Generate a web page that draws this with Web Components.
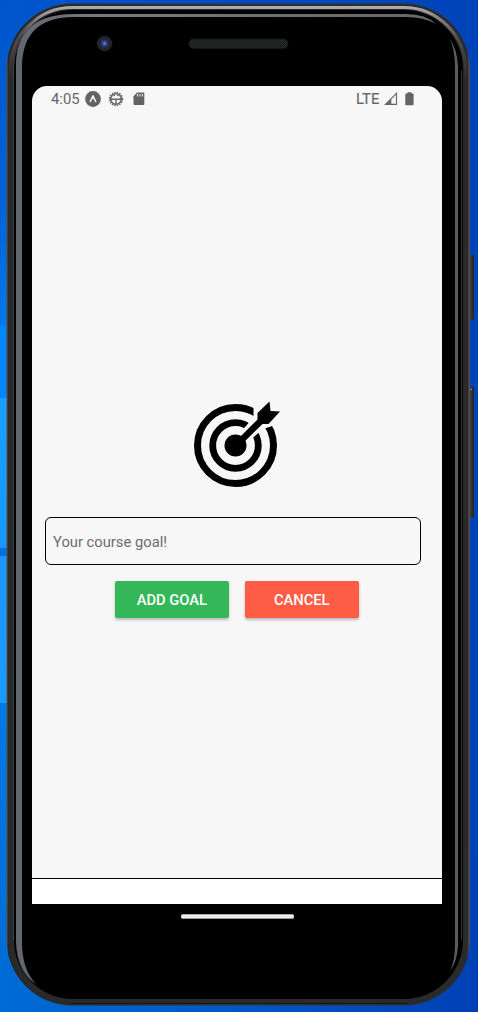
<!DOCTYPE html>
<html lang="en">
<head>
<meta charset="utf-8">
<title>Course goals</title>
<style>
html,body{margin:0;height:100%;overflow:hidden}
body{font-family:Roboto,"Liberation Sans",sans-serif}
</style>
</head>
<body>
<phone-device>
  <status-bar slot="status"></status-bar>
  <goal-form></goal-form>
</phone-device>
<script>
function define(name, html) {
  const t = document.createElement('template');
  t.innerHTML = html;
  customElements.define(name, class extends HTMLElement {
    constructor() {
      super();
      this.attachShadow({mode:'open'}).appendChild(t.content.cloneNode(true));
    }
  });
}

define('phone-frame', `
<style>:host{display:block;width:478px;height:1012px}svg{display:block}</style>
<svg width="478" height="1012" viewBox="0 0 478 1012">
  <defs>
    <linearGradient id="wall"><stop offset="0" stop-color="#0057cd"/><stop offset=".5" stop-color="#004ac5"/><stop offset="1" stop-color="#0043b9"/></linearGradient>
    <linearGradient id="base"><stop offset="0" stop-color="#006bd4"/><stop offset=".45" stop-color="#0059ca"/><stop offset="1" stop-color="#0040b5"/></linearGradient>
    <linearGradient id="left" x2="0" y2="1">
      <stop offset="0" stop-color="#0055cb"/><stop offset=".2" stop-color="#0062d8"/><stop offset=".32" stop-color="#0078ea"/>
      <stop offset=".3925" stop-color="#0090ff"/><stop offset=".393" stop-color="#18a0ff"/><stop offset=".541" stop-color="#1897fb"/><stop offset=".5411" stop-color="#0070dc"/>
      <stop offset=".549" stop-color="#0070dc"/><stop offset=".5491" stop-color="#1d94fa"/><stop offset=".695" stop-color="#1b9bff"/>
      <stop offset=".6951" stop-color="#0079e4"/><stop offset=".85" stop-color="#0071dc"/><stop offset="1" stop-color="#006bd4"/>
    </linearGradient>
    <linearGradient id="edge"><stop offset="0" stop-color="#5b5653"/><stop offset=".004" stop-color="#292727"/><stop offset=".5" stop-color="#333"/><stop offset=".993" stop-color="#2b2c2c"/><stop offset="1" stop-color="#555"/></linearGradient>
    <linearGradient id="topFade" gradientUnits="userSpaceOnUse" x1="0" y1="5" x2="0" y2="80"><stop offset="0" stop-color="#b3b2b5"/><stop offset=".15" stop-color="#8b8b8d"/><stop offset=".45" stop-color="#4c4c4d"/><stop offset="1" stop-color="#2a2a2a"/></linearGradient>
    <linearGradient id="silver"><stop offset="0" stop-color="#62656d"/><stop offset=".2" stop-color="#777a82"/><stop offset="1" stop-color="#66676d"/></linearGradient>
    <linearGradient id="key"><stop offset="0" stop-color="#171717"/><stop offset=".5" stop-color="#3d3b39"/><stop offset="1" stop-color="#242322"/></linearGradient>
    <pattern id="mesh" width="2" height="2" patternUnits="userSpaceOnUse"><rect width="2" height="2" fill="#1b1f1d"/><path d="M0 0h1v1H0zM1 1h1v1H1z" fill="#242927"/></pattern>
    <radialGradient id="lens"><stop offset="0" stop-color="#7a91d2"/><stop offset=".22" stop-color="#34488b"/><stop offset=".52" stop-color="#202a55"/><stop offset=".6" stop-color="#242529"/><stop offset="1" stop-color="#202123"/></radialGradient>
  </defs>
  <rect width="478" height="1012" fill="url(#wall)"/>
  <rect y="850" width="478" height="162" fill="url(#base)"/>
  <rect width="9" height="1012" fill="url(#left)"/>
  <path d="M0 324L8 327V398H0Z" fill="#0085fb"/>
  <rect x="467" y="255" width="7" height="65" rx="1.5" fill="url(#key)"/>
  <rect x="467" y="387" width="7" height="131" rx="1.5" fill="url(#key)"/>
  <circle cx="471" cy="389.5" r="1" fill="#85817d"/>
  <rect x="6.500" y="3.500" width="463.500" height="1002" rx="66" fill="url(#edge)"/>
  <rect x="8" y="5" width="460" height="999" rx="64" fill="#292929"/>
  <rect x="10.500" y="7.500" width="455" height="993" rx="62" fill="none" stroke="url(#topFade)" stroke-width="3.200"/>
  <rect x="14" y="10" width="449" height="989" rx="59" fill="#000"/>
  <path d="M13.500 940V70Q13.500 35 35 19" fill="none" stroke="#444" stroke-width="1"/>
  <path d="M461.500 70V940" fill="none" stroke="#343536" stroke-width="1"/>
  <path d="M16 80V66C16 30 36 14 75 14H406Q426 14 436 24Q424 17 406 17H74C39 17 22 34 22 68V945Q23 972 37 985Q17 972 16 942Z" fill="url(#silver)"/>
  <path d="M450 39Q457 49 458 66V946Q457 962 450 971Q455 961 455 944V69Q455 50 450 39Z" fill="#5b5b61"/>
  <path d="M70 1003.500H408" stroke="#161616" stroke-width="1"/>
  <circle cx="104.500" cy="43.500" r="7.800" fill="url(#lens)"/>
  <rect x="189" y="39" width="99" height="9.500" rx="4.500" fill="url(#mesh)" stroke="#171b19" stroke-width=".7"/>
</svg>`);

define('phone-device', `
<style>
:host{display:grid;width:478px;height:1012px}
phone-frame,.body{grid-area:1/1}
.body{z-index:1;display:flex;flex-direction:column;padding:86px 36px 0 32px;box-sizing:border-box;align-items:center}
.screen{display:flex;flex-direction:column;box-sizing:border-box;width:410px;height:793px;background:#f7f7f7;border-bottom:1px solid #000;border-radius:15px 15px 0 0}
.nav{width:410px;height:25px;background:#fff}
.pill{width:113px;height:5px;box-sizing:border-box;border-radius:2px;background:#ececec;border-top:1px solid #aaa;border-bottom:1px solid #999;margin:10px 0 0 0}
</style>
<phone-frame></phone-frame>
<div class="body"><div class="screen"><slot name="status"></slot><slot></slot></div><div class="nav"></div><div class="pill"></div></div>`);

define('status-bar', `
<style>
:host{display:flex;justify-content:space-between;height:26px;padding:0 28px 0 19px;color:#666;font-size:14.8px;line-height:27px}
.group{display:flex;align-items:center}
svg{display:block;flex:none}
.lte{font-size:14.800px;line-height:26px;letter-spacing:.1px;-webkit-text-stroke:.15px #666;margin-right:.5px}
</style>
<div class="group"><span>4:05</span>
<svg style="margin-left:5px" width="16" height="26" viewBox="0 0 16 26"><circle cx="8" cy="13" r="7.900" fill="#636363"/><path d="M4.400 15.800Q6.600 11.200 7.300 9.500Q8 8.700 8.700 9.500Q9.400 11.200 11.600 15.800L10.500 16.600Q9 13.500 8 12.200Q7 13.500 5.500 16.600Z" fill="#f7f7f7"/></svg>
<svg style="margin-left:7.500px" width="16" height="26" viewBox="0 0 16 26"><g fill="none" stroke="#666"><circle cx="8" cy="13" r="6.500" stroke-width="1.500" stroke-dasharray="1.450 1.102"/><circle cx="8" cy="13" r="5.300" stroke-width="1.600"/><path d="M3 13.300h10M8 13v5M5.800 8.500l.8 1.500M10.200 8.500l-.8 1.500" stroke-width="1.400"/></g></svg>
<svg style="margin-left:9px" width="12" height="26" viewBox="0 0 12 26"><path d="M4 6.500h6.500Q11.300 6.500 11.300 7.500v10.500Q11.300 19 10.300 19H1.500Q.5 19 .5 18v-7.800Z" fill="#636363"/><path d="M4.500 8v2.500M6.900 8v2.500M9.300 8v2.500" stroke="#f7f7f7" stroke-width="1"/></svg>
</div>
<div class="group"><span class="lte">LTE</span>
<svg style="margin-left:4px" width="14" height="26" viewBox="0 0 14 26"><path d="M1.400 18.400L12.500 7.300V18.400Z" fill="none" stroke="#666" stroke-width="1.100"/><path d="M1 18.700L7.300 12.400V18.700Z" fill="#666"/></svg>
<svg style="margin-left:7px" width="9" height="26" viewBox="0 0 9 26"><path d="M2.500 6.300h4v1.200H8q.6 0 .6.700v10.300q0 .7-.7.700H1q-.7 0-.7-.7V8.200q0-.7.700-.7h1.500Z" fill="#636363"/></svg>
</div>`);

define('goal-target', `
<style>:host{display:block;width:90px;height:90px}svg{display:block}</style>
<svg width="90" height="90" viewBox="0 0 90 90">
<g fill="none" stroke="#000" stroke-width="7"><circle cx="45.500" cy="45.500" r="38"/><circle cx="45.500" cy="45.500" r="22.800" stroke-width="6.800"/></g>
<path d="M51 48L43 40L56 26L63.500 17V8L78 8L88 20L81 26.500L73 29Z" fill="#f7f7f7"/>
<circle cx="45.500" cy="45.500" r="11" fill="#000"/>
<path d="M43.500 43.500L67.500 19.500V13L79.500 1.500L80.500 11L90 11.500L78.500 24H72.500L48 48Z" fill="#000"/>
</svg>`);

define('app-button', `
<style>
:host{display:flex;align-items:center;justify-content:center;width:113.500px;height:37px;box-sizing:border-box;border-radius:2px;background:var(--fill);color:#fff;font-size:14.700px;font-weight:500;box-shadow:0 2px 3px rgba(0,0,0,.25);padding-top:1px}
</style><slot></slot>`);

define('goal-form', `
<style>
:host{display:flex;flex-direction:column;align-items:center;padding:288px 21px 0 12px}
.field{display:flex;align-items:center;width:376px;height:47.500px;box-sizing:border-box;border:1.400px solid #000;border-radius:6px;padding:2px 7px 0;margin:27px 0 .5px 1px;color:#6c6c6c;font-size:14.750px}
.actions{display:flex;gap:16.500px;margin-top:16px;margin-left:8.500px}
goal-target{margin-left:5px}
</style>
<goal-target></goal-target>
<div class="field">Your course goal!</div>
<div class="actions"><app-button style="--fill:#34b758">ADD GOAL</app-button><app-button style="--fill:#ff5c45">CANCEL</app-button></div>`);
</script>
</body>
</html>
